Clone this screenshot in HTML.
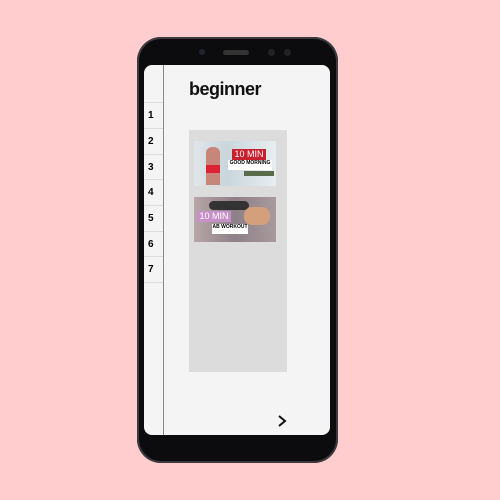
<html><head><style>
body{margin:0;width:500px;height:500px;background:#ffcdcd;position:relative;overflow:hidden;font-family:"Liberation Sans",sans-serif}
.ph{position:absolute;left:137px;top:37px;width:201px;height:426px;background:#0c0c0e;border-radius:24px;box-shadow:inset 0 0 0 2px #3a3a40}
.scr{position:absolute;left:144px;top:65px;width:186px;height:370px;background:#f4f4f4;border-radius:8px;overflow:hidden}
.side{position:absolute;left:0;top:0;width:19px;height:370px;border-right:1px solid #888}
.row{position:absolute;left:0;width:19px;height:25px;border-top:1px solid #ddd;font-size:10px;font-weight:bold;line-height:25px;text-align:left;padding-left:4px;box-sizing:border-box}
.t{position:absolute;left:45px;top:14px;font-size:18px;font-weight:bold;color:#111;letter-spacing:-0.5px}
.panel{position:absolute;left:45px;top:65px;width:98px;height:242px;background:#dcdcdc}
.th{position:absolute;left:5px;width:82px;height:45px}
</style></head><body>
<div class="ph">
<div style="position:absolute;left:86px;top:13px;width:26px;height:5px;background:#333;border-radius:3px"></div>
<div style="position:absolute;left:62px;top:12px;width:6px;height:6px;background:#223;border-radius:50%"></div>
<div style="position:absolute;left:131px;top:12px;width:7px;height:7px;background:#222;border-radius:50%"></div>
<div style="position:absolute;left:147px;top:12px;width:7px;height:7px;background:#222;border-radius:50%"></div>
</div>
<div class="scr">
<div class="side">
<div class="row" style="top:37px">1</div>
<div class="row" style="top:63px">2</div>
<div class="row" style="top:89px">3</div>
<div class="row" style="top:114px">4</div>
<div class="row" style="top:140px">5</div>
<div class="row" style="top:166px">6</div>
<div class="row" style="top:191px">7</div>
<div class="row" style="top:217px"></div>
</div>
<div class="t">beginner</div>
<div class="panel">
<div class="th" style="top:11px;background:linear-gradient(90deg,#dfe6ea,#c9d6dc 40%,#e8eef0)">
<div style="position:absolute;left:12px;top:6px;width:14px;height:38px;background:#c8867a;border-radius:6px 6px 0 0"></div>
<div style="position:absolute;left:12px;top:24px;width:14px;height:8px;background:#d23"></div>
<div style="position:absolute;left:38px;top:8px;width:34px;height:11px;background:#c8202d;color:#fff;font-size:9px;line-height:11px;text-align:center">10 MIN</div>
<div style="position:absolute;left:34px;top:19px;width:44px;height:10px;background:#fff;font-size:5px;font-weight:bold;text-align:center">GOOD MORNING</div>
<div style="position:absolute;left:50px;top:30px;width:30px;height:5px;background:#5a6a4a"></div>
</div>
<div class="th" style="top:67px;background:linear-gradient(90deg,#b8a6a8,#8d8088 50%,#a89a9c)">
<div style="position:absolute;left:15px;top:4px;width:40px;height:9px;background:#333;border-radius:5px"></div>
<div style="position:absolute;left:50px;top:10px;width:26px;height:18px;background:#d4a07c;border-radius:8px"></div>
<div style="position:absolute;left:3px;top:14px;width:34px;height:11px;background:#c890c8;color:#fff;font-size:9px;line-height:11px;text-align:center">10 MIN</div>
<div style="position:absolute;left:18px;top:27px;width:36px;height:10px;background:#fff;font-size:5px;font-weight:bold;text-align:center">AB WORKOUT</div>
</div>
</div>
<svg style="position:absolute;left:133px;top:349px" width="10" height="14"><path d="M2 2L8 7L2 12" stroke="#111" stroke-width="2" fill="none"/></svg>
</div>
</body></html>
